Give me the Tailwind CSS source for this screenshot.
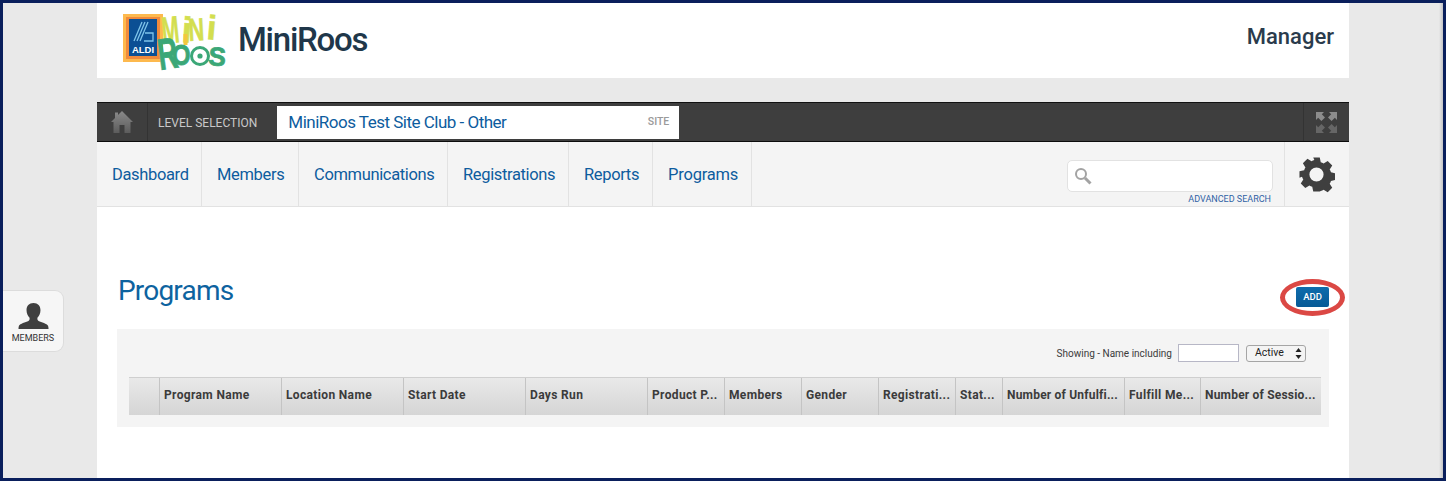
<!DOCTYPE html>
<html lang="en">
<head>
<meta charset="UTF-8">
<title>MiniRoos Manager - Programs</title>
<script src="https://cdn.jsdelivr.net/npm/@tailwindcss/browser@4"></script>
</head>
<body class="m-0 font-['Roboto',sans-serif]">
<div class="relative w-[1446px] h-[481px] overflow-hidden border-[3px] border-[#0a1f5c] bg-[#e9e9e9]">
  <!-- right edge shadow -->
  <div class="absolute right-0 top-0 bottom-0 w-[4px] bg-gradient-to-r from-transparent to-[#c4c4c6]"></div>

  <!-- members tab -->
  <div class="absolute left-0 top-[287px] w-[61px] h-[62px] bg-[#f6f6f6] border border-l-0 border-[#dcdcdc] rounded-r-[9px] flex flex-col items-center pt-[12px]">
    <svg class="w-[31px] h-[26px]" viewBox="0 0 32 29" preserveAspectRatio="none"><path fill="#3f3f3f" d="M16 0c4.600 0 7.200 3.400 7.200 8 0 3.600-1.400 6.200-3 8.200-.5 1.600-.2 3 1 3.800 3 1.700 8.800 2.600 9.800 5.500.4 1 .5 2 .5 3.500H.5c0-1.500.1-2.500.5-3.500 1-2.900 6.800-3.800 9.800-5.500 1.200-.8 1.500-2.200 1-3.800-1.600-2-3-4.600-3-8.200C8.800 3.400 11.400 0 16 0z"/></svg>
    <span class="mt-[4px] text-[9px] leading-[11px] text-[#333]">MEMBERS</span>
  </div>

  <div class="ml-[94px] w-[1252px] h-full flex flex-col">
    <!-- header -->
    <header class="h-[75px] bg-white flex items-start justify-between shrink-0">
      <div class="flex items-start">
        <svg class="ml-[26px] mt-[11px] w-[106px] h-[60px] overflow-visible" viewBox="0 0 106 60" font-family="Liberation Sans" font-weight="700">
          <rect x="0" y="0" width="40" height="48" fill="#fdb94e"/>
          <rect x="3" y="3" width="34" height="42" fill="#f08a3c"/>
          <rect x="6" y="5" width="28" height="37" fill="#0b4f94"/>
          <path d="M11 27 L19 8 M14 27 L22 8 M17 27 L25 8" stroke="#7fc4ea" stroke-width="1.300"/>
          <path d="M22 19h8v8h-9" fill="none" stroke="#7fc4ea" stroke-width="1.300"/>
          <text x="20" y="38.500" text-anchor="middle" font-size="9.500" fill="#fff">ALDI</text>
          <g fill="#d3de4f" stroke="#d3de4f" stroke-width=".6">
            <text font-size="38" transform="translate(40 30) rotate(-6) scale(.55 1)">M</text>
            <text font-size="36" transform="translate(58 28) rotate(4)">i</text>
            <text font-size="32" transform="translate(66 27) rotate(-3) scale(.68 1)">N</text>
            <text font-size="34" transform="translate(83 25) rotate(5)">i</text>
          </g>
          <rect x="60.500" y="20" width="4" height="11" fill="#f3c73f"/>
          <g fill="#3ba777" stroke="#3ba777" stroke-width=".8">
            <text font-size="44" transform="translate(37 56) rotate(-8) scale(.62 1)">R</text>
            <text font-size="29" transform="translate(49 51) scale(.82 1)">O</text>
            <text font-size="26" transform="translate(85 51) rotate(4)">S</text>
          </g>
          <circle cx="77" cy="42" r="8.500" fill="#fff" stroke="#3ba777" stroke-width="3"/>
          <circle cx="77" cy="42" r="2.600" fill="#3ba777"/>
        </svg>
        <span class="ml-[9px] mt-[16px] text-[33px] leading-[41px] font-medium tracking-[-1.250px] text-[#20374a]">MiniRoos</span>
      </div>
      <span class="mr-[15px] mt-[20px] text-[22px] leading-[28px] font-medium text-[#2a3b4c]">Manager</span>
    </header>

    <div class="h-[24px] shrink-0"></div>

    <!-- level bar -->
    <div class="h-[40px] shrink-0 bg-[#3e3e3e] border-y-[1px] border-t-[#111] border-b-[#0c0c0c] flex items-center">
      <div class="w-[51px] h-full flex items-center justify-center border-r border-[#333]">
        <svg class="w-[24px] h-[24px]" viewBox="0 0 24 24"><defs><linearGradient id="homeFill" x1="0" y1="0" x2="0" y2="1"><stop offset="0" stop-color="#8a8a8a"/><stop offset="1" stop-color="#5c5c5c"/></linearGradient></defs><path fill="url(#homeFill)" d="M12 1 L23 12 L20.500 12 L20.500 23 L14.500 23 L14.500 15 L9.500 15 L9.500 23 L3.500 23 L3.500 12 L1 12 L5 8 L5 2.500 L8 2.500 L8 5z"/></svg>
      </div>
      <span class="ml-[10px] pt-[1px] text-[12px] text-[#c9c9c9]">LEVEL SELECTION</span>
      <div class="ml-[20px] w-[402px] h-[33px] bg-white flex items-center justify-between pl-[11px] pr-[10px]">
        <span class="pt-[1px] text-[17px] text-[#0d5c9e] tracking-[-0.5px]">MiniRoos Test Site Club - Other</span>
        <span class="text-[10.500px] font-medium text-[#9a9a9a]">SITE</span>
      </div>
      <div class="ml-auto w-[46px] h-full flex items-center justify-center border-l border-[#333]">
        <svg class="w-[21px] h-[21px]" viewBox="0 0 21 21" fill="#8c8c8c"><path d="M0 0h8L5.800 2.200 9 5.400 5.400 9 2.200 5.800 0 8z"/><path d="M21 0v8l-2.200-2.200L15.600 9 12 5.400l3.200-3.200L13 0z"/><path fill="#666" d="M0 21v-8l2.200 2.200L5.400 12 9 15.600l-3.200 3.200L8 21z"/><path fill="#666" d="M21 21h-8l2.200-2.200L12 15.600 15.600 12l3.200 3.200L21 13z"/></svg>
      </div>
    </div>

    <!-- nav -->
    <nav class="h-[65px] shrink-0 bg-[#f4f4f4] border-b border-[#e2e2e2] flex items-stretch">
      <a class="w-[105px] pl-[15px] pt-[2px] flex items-center border-r border-[#e2e2e2] text-[16.500px] tracking-[-0.35px] text-[#0d5c9e]">Dashboard</a>
      <a class="w-[97px] pl-[15px] pt-[2px] flex items-center border-r border-[#e2e2e2] text-[16.500px] tracking-[-0.35px] text-[#0d5c9e]">Members</a>
      <a class="w-[149px] pl-[15px] pt-[2px] flex items-center border-r border-[#e2e2e2] text-[16.500px] tracking-[-0.35px] text-[#0d5c9e]">Communications</a>
      <a class="w-[121px] pl-[15px] pt-[2px] flex items-center border-r border-[#e2e2e2] text-[16.500px] tracking-[-0.35px] text-[#0d5c9e]">Registrations</a>
      <a class="w-[84px] pl-[15px] pt-[2px] flex items-center border-r border-[#e2e2e2] text-[16.500px] tracking-[-0.35px] text-[#0d5c9e]">Reports</a>
      <a class="w-[99px] pl-[15px] pt-[2px] flex items-center border-r border-[#e2e2e2] text-[16.500px] tracking-[-0.2px] text-[#0d5c9e]">Programs</a>
      <div class="ml-auto w-[206px] mr-[11px] flex flex-col items-end pt-[18px]">
        <div class="w-[206px] h-[32px] bg-white border border-[#e2e2e2] rounded-[5px] flex items-center pl-[6px]">
          <svg class="w-[18px] h-[18px]" viewBox="0 0 18 18" fill="none" stroke="#a3a3a3"><circle cx="7" cy="7" r="5" stroke-width="2"/><path d="M11 11l5.500 5.500" stroke-width="3"/></svg>
        </div>
        <span class="mt-[1px] mr-[2px] text-[9px] leading-[12px] text-[#2f62a4]">ADVANCED SEARCH</span>
      </div>
      <div class="w-[65px] border-l border-[#e2e2e2] flex items-center justify-center">
        <svg class="w-[37px] h-[37px] mr-[2px]" viewBox="0 0 24 24"><path fill="#3f3f3f" fill-rule="evenodd" d="M9.700 0h4.600l.7 3.300c.7.2 1.400.5 2 .9l2.900-1.800 3.200 3.200-1.800 2.900c.4.600.7 1.300.9 2l3.300.7v4.600l-3.300.7c-.2.700-.5 1.400-.9 2l1.800 2.900-3.200 3.200-2.900-1.800c-.6.4-1.300.7-2 .9L14.300 24H9.700L9 20.700c-.7-.2-1.400-.5-2-.9l-2.900 1.800L.9 18.400l1.800-2.900c-.4-.6-.7-1.300-.9-2L0 14.300V9.700L3.300 9c.2-.7.500-1.400.9-2L2.400 4.100l3.200-3.200L8.500 2.700c.6-.4 1.300-.7 2-.9zM12 7a5 5 0 1 0 0 10 5 5 0 0 0 0-10z" transform="translate(12 12) scale(.92) translate(-12 -12)"/></svg>
      </div>
    </nav>

    <!-- content -->
    <main class="flex-1 bg-white px-[20px] pt-[66px]">
      <div class="h-[56px] flex items-start justify-between">
        <h1 class="ml-[1px] pt-[1px] text-[28px] leading-[34px] tracking-[-0.8px] text-[#0d639f]">Programs</h1>
        <div class="relative mt-[14px]">
          <button class="block w-[33px] h-[20px] rounded-[2px] bg-gradient-to-b from-[#0f6cac] to-[#075a96] text-[9.500px] font-medium text-white">ADD</button>
          <div class="absolute left-[-16px] top-[-8px] w-[65px] h-[37px] rounded-[50%] border-[5px] border-[#db4844]"></div>
        </div>
      </div>
      <div class="w-[1212px] h-[98px] bg-[#f4f4f4] px-[12px] pt-[15px]">
        <div class="h-[18px] flex items-center justify-end pr-[11px] text-[10px] text-[#3b3b3b]">
          <span>Showing - Name including</span>
          <input type="text" class="ml-[6px] w-[61px] h-[18px] bg-white border border-[#b7b7c6]">
          <div class="ml-[7px] w-[60px] h-[17px] bg-[#f4f4f4] border border-[#a5a5a5] rounded-[3px] flex items-center justify-between pl-[8px] pr-[3px] text-[10.500px] text-[#222]">
            <span>Active</span>
            <svg class="w-[7px] h-[11px]" viewBox="0 0 7 11" fill="#222"><path d="M3.500 0L6.500 4H.5zM3.500 11L.5 7h6z"/></svg>
          </div>
        </div>
        <div class="mt-[15px] w-[1192px] h-[38px] flex border-t border-[#cfcfcf] bg-gradient-to-b from-[#e9e9e9] to-[#d5d5d5] text-[12px] font-bold text-[#3b3b3b] tracking-[0.35px]">
          <div class="w-[31px] border-r border-[#c4c4c4]"></div>
          <div class="w-[122px] pl-[4px] pb-[3px] flex items-center border-r border-[#c4c4c4]">Program Name</div>
          <div class="w-[122px] pl-[4px] pb-[3px] flex items-center border-r border-[#c4c4c4]">Location Name</div>
          <div class="w-[122px] pl-[4px] pb-[3px] flex items-center border-r border-[#c4c4c4]">Start Date</div>
          <div class="w-[122px] pl-[4px] pb-[3px] flex items-center border-r border-[#c4c4c4]">Days Run</div>
          <div class="w-[77px] pl-[4px] pb-[3px] flex items-center border-r border-[#c4c4c4]">Product P...</div>
          <div class="w-[77px] pl-[4px] pb-[3px] flex items-center border-r border-[#c4c4c4]">Members</div>
          <div class="w-[77px] pl-[4px] pb-[3px] flex items-center border-r border-[#c4c4c4]">Gender</div>
          <div class="w-[77px] pl-[4px] pb-[3px] flex items-center border-r border-[#c4c4c4]">Registrati...</div>
          <div class="w-[47px] pl-[4px] pb-[3px] flex items-center border-r border-[#c4c4c4]">Stat...</div>
          <div class="w-[122px] pl-[4px] pb-[3px] flex items-center border-r border-[#c4c4c4] tracking-[0.2px]">Number of Unfulfi...</div>
          <div class="w-[76px] pl-[4px] pb-[3px] flex items-center border-r border-[#c4c4c4]">Fulfill Me...</div>
          <div class="w-[120px] pl-[4px] pb-[3px] flex items-center tracking-[0.2px]">Number of Sessio...</div>
        </div>
      </div>
    </main>
  </div>
</div>
</body>
</html>
